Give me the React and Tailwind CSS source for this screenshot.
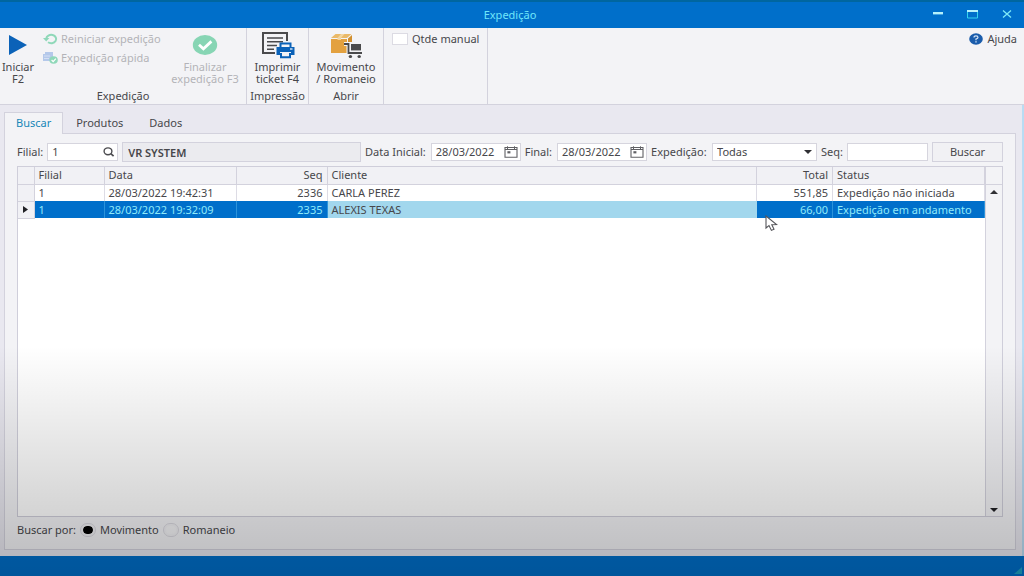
import React, { useState } from "react";

const TABS = ["Buscar", "Produtos", "Dados"];

const ROWS = [
  {
    filial: "1",
    data: "28/03/2022 19:42:31",
    seq: "2336",
    cliente: "CARLA PEREZ",
    total: "551,85",
    status: "Expedição não iniciada",
  },
  {
    filial: "1",
    data: "28/03/2022 19:32:09",
    seq: "2335",
    cliente: "ALEXIS TEXAS",
    total: "66,00",
    status: "Expedição em andamento",
  },
];

/* ---------- Icons ---------- */

const PlayIcon = () => (
  <svg width="20" height="22" viewBox="0 0 20 22">
    <path d="M1 1 L19 11 L1 21 Z" fill="#0b62b8" />
  </svg>
);

const RestartIcon = () => (
  <svg width="15" height="12" viewBox="0 0 15 12" fill="none">
    <path d="M3.2 5.6 A5 4.2 0 1 1 5 9.3" stroke="#8fd8b9" strokeWidth="2" />
    <path d="M0 5 L6.4 5 L3.2 8.4 Z" fill="#8fd8b9" />
  </svg>
);

const QuickIcon = () => (
  <svg width="15" height="12" viewBox="0 0 15 12" fill="none">
    <path d="M2 0 H10 V6 H8 V9 H0 V2 H2 Z" fill="#b4c8ea" />
    <path d="M1 4 H7 M1 6.5 H6" stroke="#d5e0f3" />
    <ellipse cx="10.6" cy="8" rx="4.2" ry="3.8" fill="#8fd8b9" />
    <path d="M8.6 8 L10.2 9.6 L12.8 6.6" stroke="#fff" strokeWidth="1.2" />
  </svg>
);

const CheckIcon = () => (
  <svg width="26" height="22" viewBox="0 0 26 22" fill="none">
    <ellipse cx="13" cy="11" rx="12.2" ry="10" fill="#87d5b4" />
    <path d="M7 10.8 L11.4 14.8 L19.4 7.4" stroke="#fff" strokeWidth="2.8" />
  </svg>
);

const PrintIcon = () => (
  <svg width="34" height="28" viewBox="0 0 34 28" fill="none">
    <path d="M14 22 H2 V2 H26 V10" stroke="#4a4a4c" strokeWidth="2" />
    <path d="M6 7 H22 M6 10.8 H22 M6 14.6 H16 M6 18.2 H13" stroke="#4a4a4c" strokeWidth="1.5" />
    <path d="M19.5 16 V12.5 H29.5 V16" stroke="#0b62b8" strokeWidth="2" />
    <path d="M15.5 16 H33.5 V24 H30 V21 H19 V24 H15.5 Z" fill="#0b62b8" />
    <path d="M20 22 V26.2 H29 V22" stroke="#0b62b8" strokeWidth="2" />
    <path d="M29 18 H31.5" stroke="#fff" strokeWidth="1.2" />
  </svg>
);

const BoxCartIcon = () => (
  <svg width="34" height="28" viewBox="0 0 34 28" fill="none">
    <path d="M2 8 H18 V22 H2 Z" fill="#e3a13f" />
    <path d="M2 7 L6.5 3 H22.5 L18 7 Z" fill="#eab968" />
    <path d="M19 7.6 L23 4 V11 H19 Z" fill="#d18f2f" />
    <path d="M8.5 7 L12 3 H15.5 L12 7 V9 H8.5 Z" fill="#f3d5a0" />
    <path d="M15 13 H19.5 V22 H32" stroke="#f3f3f6" strokeWidth="4" />
    <path d="M15 13 H19.5 V22 H33" stroke="#4a4a4c" strokeWidth="1.8" />
    <path d="M22 13 H32 V19.4 H22 Z" fill="#4a4a4c" />
    <ellipse cx="21.4" cy="25.6" rx="1.7" ry="1.5" fill="#4a4a4c" />
    <ellipse cx="30.2" cy="25.6" rx="1.7" ry="1.5" fill="#4a4a4c" />
  </svg>
);

const HelpIcon = () => (
  <svg width="14" height="12" viewBox="0 0 14 12" fill="none">
    <ellipse cx="7" cy="6" rx="6.8" ry="5.8" fill="#1a5cab" />
    <path d="M5 4.6 Q5 2.8 7 2.8 Q9 2.8 9 4.4 Q9 5.4 7 6 V7.2" stroke="#d8e6f6" strokeWidth="1.2" />
    <path d="M6.3 8.3 H7.7 V9.5 H6.3 Z" fill="#d8e6f6" />
  </svg>
);

const SearchIcon = () => (
  <svg width="12" height="10" viewBox="0 0 12 10" fill="none" stroke="#4c4c50" strokeWidth="1.4">
    <ellipse cx="5" cy="4.3" rx="3.9" ry="3.4" />
    <path d="M7.8 6.6 L10.6 9.2" strokeWidth="1.7" />
  </svg>
);

const CalendarIcon = () => (
  <svg width="14" height="12" viewBox="0 0 14 12" fill="none" stroke="#606064">
    <path d="M1 1.5 H13 V11.2 H1 Z" strokeWidth="1.1" />
    <path d="M3.5 0.3 V3 M10.5 0.3 V3 M1 3.5 H13" />
    <path d="M3.4 5.2 H6.4 V7.4 H3.4 Z" fill="#606064" stroke="none" />
  </svg>
);

const CursorIcon = () => (
  <svg width="13" height="17" viewBox="0 0 13 17">
    <path
      d="M1 1 V13 L4 10.6 L6.4 15.4 L9 14.2 L6.8 9.8 L11.6 9.6 Z"
      fill="#fff"
      stroke="#55555a"
      strokeWidth="1.1"
    />
  </svg>
);

/* ---------- Building blocks ---------- */

const RibbonGroup = ({ title, className, children }) => (
  <div className={`flex shrink-0 flex-col border-r border-[#d3d2dd] ${className}`}>
    <div className="flex flex-1 items-start">{children}</div>
    <div className="h-4 text-center leading-4">{title}</div>
  </div>
);

const BigButton = ({ icon, text, className, disabled }) => (
  <button
    type="button"
    disabled={disabled}
    className={`flex flex-col items-center pt-px leading-3 whitespace-pre-line disabled:text-[#b3b3b8] ${className}`}
  >
    <span className="flex h-8 items-center justify-center">{icon}</span>
    {text}
  </button>
);

const DateField = ({ id, label, value }) => (
  <div className="flex shrink-0 items-center gap-[5px]">
    <label htmlFor={id}>{label}</label>
    <div className="flex h-[18px] w-[90px] items-center border border-[#d6d5de] bg-white pr-0.5">
      <input id={id} defaultValue={value} className="w-full min-w-0 pl-1 outline-none" />
      <button type="button" aria-label="Abrir calendário">
        <CalendarIcon />
      </button>
    </div>
  </div>
);

const TitleBar = () => (
  <header className="flex h-7 shrink-0 items-center border-t-2 border-[#00669f] bg-[#006fca] text-[#6fe6fa]">
    <div className="flex-1 pl-2" />
    <h1>Expedição</h1>
    <div className="flex flex-1 items-center justify-end gap-6 pr-3">
      <button type="button" aria-label="Minimizar">
        <svg width="10" height="10" viewBox="0 0 10 10">
          <path d="M0 2 H10 V4.4 H0 Z" fill="#b5f1fb" />
        </svg>
      </button>
      <button type="button" aria-label="Maximizar">
        <svg width="11" height="10" viewBox="0 0 11 10" fill="none" stroke="#35d4ee">
          <path d="M0.5 0.5 H10.5 V8 H0.5 Z" />
          <path d="M0 1 H11" stroke="#b5f1fb" strokeWidth="2" />
        </svg>
      </button>
      <button type="button" aria-label="Fechar">
        <svg width="10" height="10" viewBox="0 0 10 10" stroke="#7feaf8" strokeWidth="1.3">
          <path d="M1 0.5 L9 7.5 M9 0.5 L1 7.5" />
        </svg>
      </button>
    </div>
  </header>
);

const Ribbon = () => (
  <div className="flex h-[77px] shrink-0 border-b border-[#d3d2dd] bg-[#f3f3f6]">
    <RibbonGroup title="Expedição" className="w-[247px]">
      <BigButton icon={<PlayIcon />} text={"Iniciar\nF2"} className="w-9" />
      <div className="flex flex-1 flex-col gap-[3px] pt-[3px] pl-[7px] text-[#b3b3b8]">
        <button type="button" disabled className="flex items-center gap-[3px] leading-4 whitespace-nowrap">
          <RestartIcon />
          Reiniciar expedição
        </button>
        <button type="button" disabled className="flex items-center gap-[3px] leading-4 whitespace-nowrap">
          <QuickIcon />
          Expedição rápida
        </button>
      </div>
      <BigButton icon={<CheckIcon />} text={"Finalizar\nexpedição F3"} className="w-[82px]" disabled />
    </RibbonGroup>
    <RibbonGroup title="Impressão" className="w-[62px]">
      <BigButton icon={<PrintIcon />} text={"Imprimir\nticket F4"} className="w-full" />
    </RibbonGroup>
    <RibbonGroup title="Abrir" className="w-[75px]">
      <BigButton icon={<BoxCartIcon />} text={"Movimento\n/ Romaneio"} className="w-full" />
    </RibbonGroup>
    <RibbonGroup className="w-[104px]">
      <label className="flex items-center gap-1 pt-[3px] pl-2 leading-4 whitespace-nowrap">
        <input
          type="checkbox"
          className="h-3 w-4 appearance-none border border-[#dcdbe3] bg-white checked:bg-[#006fca]"
        />
        Qtde manual
      </label>
    </RibbonGroup>
    <div className="flex flex-1 items-start justify-end pt-[3px] pr-[7px]">
      <a href="#ajuda" className="flex items-center gap-1 leading-4">
        <HelpIcon />
        Ajuda
      </a>
    </div>
  </div>
);

const Filters = () => (
  <form className="flex h-5 items-center gap-1 whitespace-nowrap" onSubmit={(e) => e.preventDefault()}>
    <label htmlFor="filial">Filial:</label>
    <div className="flex h-[18px] w-[71px] shrink-0 items-center border border-[#d6d5de] bg-white pr-0.5">
      <input id="filial" defaultValue="1" className="w-full min-w-0 pl-1 outline-none" />
      <button type="button" aria-label="Pesquisar filial">
        <SearchIcon />
      </button>
    </div>
    <input
      readOnly
      aria-label="Nome da filial"
      value="VR SYSTEM"
      className="h-5 min-w-0 flex-1 border border-[#d3d2dd] bg-[#ebebef] px-[5px] font-semibold outline-none"
    />
    <DateField id="inicial" label="Data Inicial:" value="28/03/2022" />
    <DateField id="final" label="Final:" value="28/03/2022" />
    <label htmlFor="expedicao" className="w-[57px] shrink-0">
      Expedição:
    </label>
    <div className="grid h-[18px] w-[105px] shrink-0 items-center border border-[#d6d5de] bg-white">
      <select id="expedicao" className="col-start-1 row-start-1 appearance-none pl-1 outline-none">
        <option>Todas</option>
      </select>
      <svg
        width="8"
        height="4"
        viewBox="0 0 8 4"
        className="pointer-events-none col-start-1 row-start-1 mr-1 justify-self-end"
      >
        <path d="M0 0 H8 L4 4 Z" fill="#303034" />
      </svg>
    </div>
    <label htmlFor="seq">Seq:</label>
    <input id="seq" className="h-[18px] w-[81px] shrink-0 border border-[#d6d5de] bg-white px-1 outline-none" />
    <button type="submit" className="h-5 w-[71px] shrink-0 border border-[#d3d2dd] bg-[#f1f1f4]">
      Buscar
    </button>
  </form>
);

const ResultGrid = () => {
  const [selected, setSelected] = useState(1);

  return (
    <div className="flex flex-1 border border-[#cfceda] bg-white">
      <div className="min-w-0 flex-1">
        <table className="w-full table-fixed border-collapse whitespace-nowrap">
          <colgroup>
            <col className="w-4" />
            <col className="w-[70px]" />
            <col className="w-[132px]" />
            <col className="w-[91px]" />
            <col />
            <col className="w-[76px]" />
            <col className="w-[152px]" />
          </colgroup>
          <thead>
            <tr className="h-[17px] bg-[#f1f1f5] text-left leading-4 [&>th]:border-r [&>th]:border-b [&>th]:border-[#d3d2dd] [&>th]:px-1 [&>th]:py-0 [&>th]:font-normal">
              <th />
              <th>Filial</th>
              <th>Data</th>
              <th className="text-right">Seq</th>
              <th>Cliente</th>
              <th className="text-right">Total</th>
              <th>Status</th>
            </tr>
          </thead>
          <tbody>
            {ROWS.map((row, i) => {
              const active = i === selected;
              const cell = active
                ? "border-r border-[#2c93da] bg-[#006fca] px-1 text-[#8feafa]"
                : "border-r border-[#dddce5] px-1";
              return (
                <tr key={row.seq} onClick={() => setSelected(i)} className="h-[17px] leading-4 [&>td]:py-0">
                  <td className="border-r border-b border-[#d3d2dd] bg-[#f1f1f5] p-0">
                    {active && (
                      <svg width="5" height="7" viewBox="0 0 5 7" className="mx-auto">
                        <path d="M0 0 L5 3.5 L0 7 Z" fill="#202024" />
                      </svg>
                    )}
                  </td>
                  <td className={cell}>{row.filial}</td>
                  <td className={cell}>{row.data}</td>
                  <td className={`${cell} text-right`}>{row.seq}</td>
                  <td className={active ? "bg-[#a2d7ed] px-1" : "border-r border-[#dddce5] px-1"}>
                    {row.cliente}
                  </td>
                  <td className={`${cell} relative text-right`}>
                    {row.total}
                    {/* mouse pointer */}
                    {active && (
                      <span className="pointer-events-none absolute top-3.5 left-2">
                        <CursorIcon />
                      </span>
                    )}
                  </td>
                  <td className={cell}>{row.status}</td>
                </tr>
              );
            })}
          </tbody>
        </table>
      </div>
      {/* Scroll bar */}
      <div className="flex w-[17px] shrink-0 flex-col items-center border-l border-[#d3d2dd] bg-[#f3f3f6]">
        <div className="h-[18px] w-full border-b border-[#d3d2dd]" />
        <button type="button" aria-label="Rolar para cima" className="flex h-3.5 items-center">
          <svg width="8" height="4" viewBox="0 0 8 4">
            <path d="M0 4 H8 L4 0 Z" fill="#303034" />
          </svg>
        </button>
        <div className="flex-1" />
        <button type="button" aria-label="Rolar para baixo" className="flex h-3 items-center">
          <svg width="8" height="4" viewBox="0 0 8 4">
            <path d="M0 0 H8 L4 4 Z" fill="#202024" />
          </svg>
        </button>
      </div>
    </div>
  );
};

const SearchBy = () => {
  const [mode, setMode] = useState("Movimento");

  return (
    <fieldset className="flex h-7 items-start gap-[5px] pt-[5px]">
      <span>Buscar por:</span>
      {["Movimento", "Romaneio"].map((item) => (
        <label key={item} className="flex items-center gap-[5px]">
          <input
            type="radio"
            name="modo"
            checked={mode === item}
            onChange={() => setMode(item)}
            className="h-3 w-3.5 appearance-none rounded-full border-2 border-[#f0f0f3] bg-[#f4f4f6] outline outline-[#d9d8df] checked:bg-black checked:bg-clip-padding"
          />
          {item}
        </label>
      ))}
    </fieldset>
  );
};

export default function App() {
  const [tab, setTab] = useState("Buscar");

  return (
    <div className="relative flex min-h-screen flex-col bg-[#e9e8f0] font-['Noto_Sans','Open_Sans',sans-serif] text-[11px] leading-4 text-[#47474b]">
      <TitleBar />
      <Ribbon />

      <main className="flex flex-1 flex-col border-r-2 border-[#b9dcf3] pt-[7px] pr-1.5 pb-1.5 pl-1">
        <div role="tablist" className="flex h-[21px] shrink-0">
          {TABS.map((name) => (
            <button
              key={name}
              type="button"
              role="tab"
              aria-selected={tab === name}
              onClick={() => setTab(name)}
              className={
                tab === name
                  ? "z-10 -mb-px border border-b-0 border-[#d3d2dd] bg-[#f3f3f6] px-[11px] pb-0.5 text-[#1887b8]"
                  : "px-[13px]"
              }
            >
              {name}
            </button>
          ))}
        </div>
        <section className="flex flex-1 flex-col border border-[#d3d2dd] bg-[#f3f3f6] px-3 pt-2 pb-1">
          <Filters />
          <div className="flex flex-1 flex-col pt-1">
            <ResultGrid />
          </div>
          <SearchBy />
        </section>
      </main>

      <footer className="flex h-5 shrink-0 items-end justify-end bg-[#006fca] p-0.5">
        <svg width="8" height="7" viewBox="0 0 8 7">
          <path d="M8 0 V7 H0 Z" fill="#1fa3c4" />
        </svg>
      </footer>

      {/* Shade that darkens the lower part of the window */}
      <div className="pointer-events-none absolute inset-x-0 bottom-0 z-20 h-2/5 bg-linear-to-b from-black/0 to-black/23" />
    </div>
  );
}
